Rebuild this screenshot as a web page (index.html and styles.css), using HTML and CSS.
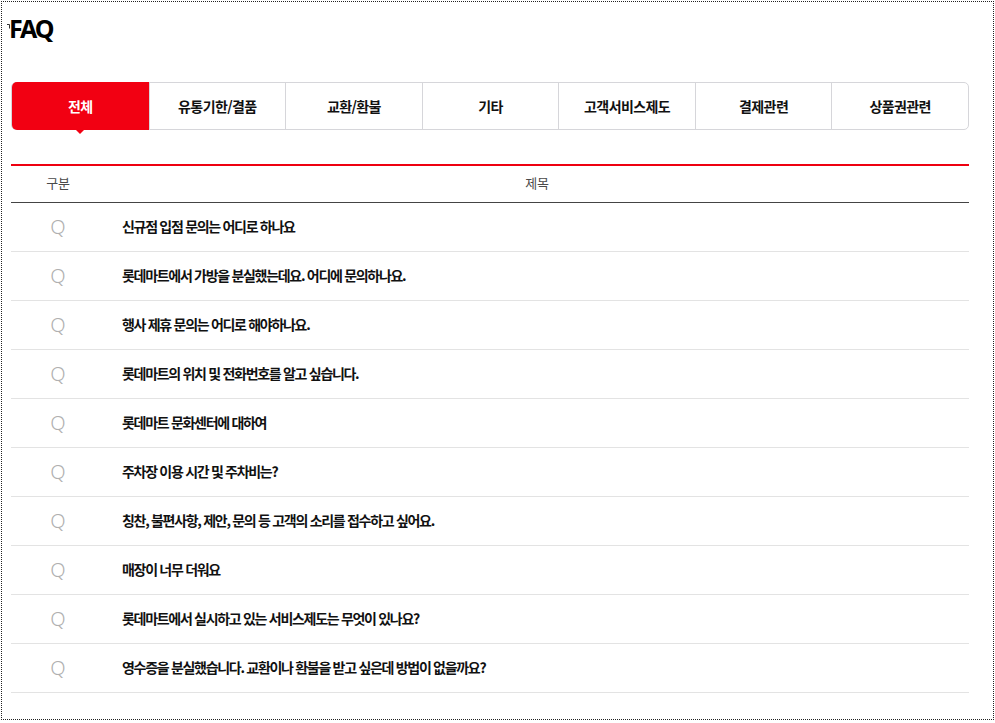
FILE: index.html
```html
<!DOCTYPE html>
<html lang="ko">
<head>
<meta charset="utf-8">
<title>FAQ</title>
<link rel="stylesheet" href="styles.css">
</head>
<body>
<div class="frame">
  <h1 class="title"><span class="mark"><svg width="3" height="5" viewBox="0 0 3 5"><path d="M0 0.5H2.5V4.5" fill="none" stroke="#333" stroke-width="1"/></svg></span>FAQ</h1>

  <ul class="tabs">
    <li class="tab active">전체</li>
    <li class="tab">유통기한/결품</li>
    <li class="tab">교환/환불</li>
    <li class="tab">기타</li>
    <li class="tab">고객서비스제도</li>
    <li class="tab">결제관련</li>
    <li class="tab">상품권관련</li>
  </ul>

  <div class="board">
    <div class="row head">
      <div class="c-type">구분</div>
      <div class="c-title">제목</div>
    </div>
    <div class="row"><div class="c-type q">Q</div><div class="c-subj">신규점 입점 문의는 어디로 하나요</div></div>
    <div class="row"><div class="c-type q">Q</div><div class="c-subj">롯데마트에서 가방을 분실했는데요. 어디에 문의하나요.</div></div>
    <div class="row"><div class="c-type q">Q</div><div class="c-subj">행사 제휴 문의는 어디로 해야하나요.</div></div>
    <div class="row"><div class="c-type q">Q</div><div class="c-subj">롯데마트의 위치 및 전화번호를 알고 싶습니다.</div></div>
    <div class="row"><div class="c-type q">Q</div><div class="c-subj">롯데마트 문화센터에 대하여</div></div>
    <div class="row"><div class="c-type q">Q</div><div class="c-subj">주차장 이용 시간 및 주차비는?</div></div>
    <div class="row"><div class="c-type q">Q</div><div class="c-subj">칭찬, 불편사항, 제안, 문의 등 고객의 소리를 접수하고 싶어요.</div></div>
    <div class="row"><div class="c-type q">Q</div><div class="c-subj">매장이 너무 더워요</div></div>
    <div class="row"><div class="c-type q">Q</div><div class="c-subj">롯데마트에서 실시하고 있는 서비스제도는 무엇이 있나요?</div></div>
    <div class="row"><div class="c-type q">Q</div><div class="c-subj">영수증을 분실했습니다. 교환이나 환불을 받고 싶은데 방법이 없을까요?</div></div>
  </div>
</div>
</body>
</html>
```

FILE: styles.css
```css
* { box-sizing: border-box; }
html, body { margin: 0; padding: 0; background: #fff; }
body {
  font-family: "Noto Sans CJK KR", "Noto Sans", sans-serif;
  color: #111;
}
.frame {
  margin: 1px;
  width: 993px;
  height: 719px;
  border: 1px dotted #222;
  padding: 0 0 0 9px;
}
.title {
  margin: 0 0 0 -4px;
  height: 80px;
  padding-top: 9px;
  font-family: "Noto Sans", sans-serif;
  font-size: 25px;
  line-height: 34px;
  font-weight: 700;
  letter-spacing: -2.2px;
  color: #000;
  display: flex;
  align-items: flex-start;
}
.mark { display: block; width: 3px; margin-top: 8px; margin-right: -1px; line-height: 0; }
.tabs {
  list-style: none;
  margin: 0;
  padding: 0;
  width: 958px;
  height: 48px;
  display: grid;
  grid-template-columns: repeat(7, 1fr);
  border: 1px solid #d6d6da;
  border-radius: 5px;
  position: relative;
}
.tab {
  display: flex;
  align-items: center;
  justify-content: center;
  font-size: 14px;
  font-weight: 700;
  letter-spacing: -0.6px;
  color: #111;
  border-left: 1px solid #d6d6da;
  position: relative;
}
.tab:first-child { border-left: none; }
.tab.active {
  background: #f20012;
  color: #fff;
  margin: -1px 0 -1px 0;
  border-radius: 5px 0 0 5px;
}
.tab.active::after {
  content: "";
  position: absolute;
  left: 50%;
  bottom: -4px;
  margin-left: -4px;
  border-left: 4px solid transparent;
  border-right: 4px solid transparent;
  border-top: 4px solid #f20012;
}
.board {
  margin-top: 34px;
  width: 958px;
  border-top: 2px solid #ee0010;
}
.row {
  display: flex;
  align-items: center;
  height: 49px;
  border-bottom: 1px solid #e3e3e3;
}
.row.head {
  height: 37px;
  border-bottom: 1px solid #444;
  font-size: 13px;
  color: #4a4a4a;
  letter-spacing: -0.3px;
  padding-bottom: 4px;
}
.c-type {
  width: 94px;
  flex: none;
  text-align: center;
}
.c-title { flex: 1; text-align: center; }
.q {
  font-family: "Noto Sans", sans-serif;
  font-size: 20px;
  font-weight: 300;
  color: #b0b0b0;
  padding-bottom: 1px;
}
.c-subj {
  padding-left: 17px;
  font-size: 14px;
  font-weight: 700;
  letter-spacing: -1.3px;
  color: #111;
  padding-bottom: 3px;
}
```
